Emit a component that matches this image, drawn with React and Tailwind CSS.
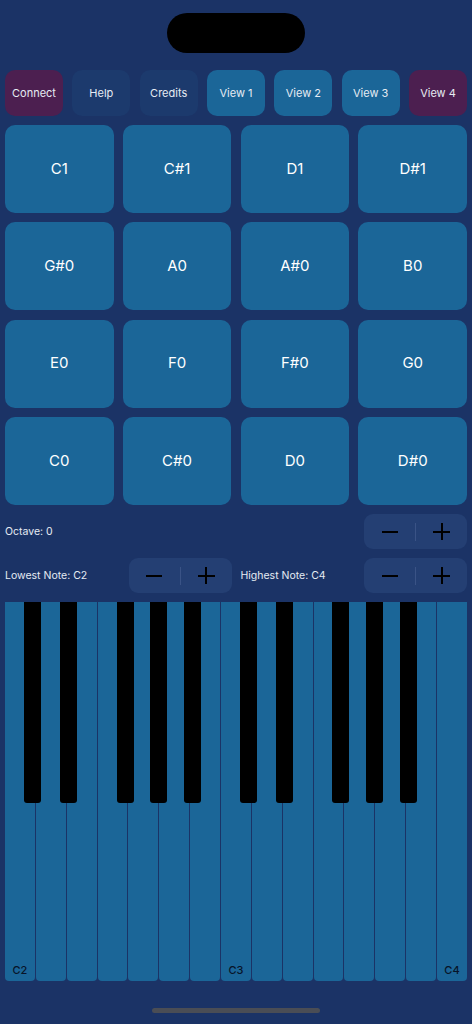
import React from 'react';

const topButtons = [
    { label: 'Connect', cls: 'bg-[#4c1f50]' },
    { label: 'Help', cls: 'bg-[#1c3a6d]' },
    { label: 'Credits', cls: 'bg-[#1c3a6d]' },
    { label: 'View 1', cls: 'bg-[#1b6698]' },
    { label: 'View 2', cls: 'bg-[#1b6698]' },
    { label: 'View 3', cls: 'bg-[#1b6698]' },
    { label: 'View 4', cls: 'bg-[#4c1f50]' },
];

const pads = [
    'C1', 'C#1', 'D1', 'D#1',
    'G#0', 'A0', 'A#0', 'B0',
    'E0', 'F0', 'F#0', 'G0',
    'C0', 'C#0', 'D0', 'D#0',
];

// black key offsets within an octave, in white-key widths
const blackOffsets = [0.62, 1.8, 3.63, 4.71, 5.81];
const WHITE_COUNT = 15;

function Stepper() {
    return (
        <div className="flex items-center w-[103px] h-[35px] rounded-[9px] bg-[#243f73]">
            <div className="flex-1 flex items-center justify-center">
                <div className="w-[16px] h-[2px] bg-black" />
            </div>
            <div className="w-px h-[18px] bg-[#3a5386]" />
            <div className="flex-1 flex items-center justify-center">
                <div className="relative w-[17px] h-[17px]">
                    <div className="absolute left-0 top-[7.5px] w-[17px] h-[2px] bg-black" />
                    <div className="absolute top-0 left-[7.5px] w-[2px] h-[17px] bg-black" />
                </div>
            </div>
        </div>
    );
}

function Piano() {
    const whites = [];
    for (let i = 0; i < WHITE_COUNT; i++) {
        let label = null;
        if (i === 0) label = 'C2';
        if (i === 7) label = 'C3';
        if (i === 14) label = 'C4';
        whites.push(
            <div key={i} className="flex-1 flex items-end justify-center pb-[3px] bg-[#1b6698] rounded-b-[4px]">
                {label && <span className="text-[11px] font-medium text-[#081428]">{label}</span>}
            </div>
        );
    }
    const blacks = [];
    for (let o = 0; o < 2; o++) {
        blackOffsets.forEach((off, j) => {
            const left = ((o * 7 + off) / WHITE_COUNT) * 100;
            blacks.push(
                <div
                    key={`${o}-${j}`}
                    className="absolute top-0 h-[53%] w-[17px] bg-black rounded-b-[3px]"
                    style={{ left: `${left}%` }}
                />
            );
        });
    }
    return (
        <div className="relative mx-[5px] h-[379px] flex gap-px">
            {whites}
            {blacks}
        </div>
    );
}

export default function App() {
    return (
        <div className="w-[472px] h-[1024px] bg-[#1b3366] flex flex-col text-[#e6ebf3]" style={{ fontFamily: 'Inter, "Noto Sans", sans-serif' }}>
            <div className="flex justify-center pt-[13px]">
                <div className="w-[138px] h-[40px] rounded-full bg-black" />
            </div>

            <div className="grid grid-cols-7 gap-[9.3px] px-[5px] mt-[17px]">
                {topButtons.map((b) => (
                    <div key={b.label} className={`h-[46px] rounded-[10px] flex items-center justify-center text-[11px] ${b.cls}`}>
                        {b.label}
                    </div>
                ))}
            </div>

            <div className="grid grid-cols-4 grid-rows-4 gap-[9.3px] px-[5px] mt-[9px] h-[380px]">
                {pads.map((p) => (
                    <div key={p} className="rounded-[10px] bg-[#1b6698] flex items-center justify-center text-[15px] text-white">
                        {p}
                    </div>
                ))}
            </div>

            <div className="flex items-center justify-between px-[5px] mt-[9px]">
                <span className="text-[10.5px]">Octave: 0</span>
                <Stepper />
            </div>

            <div className="flex items-center px-[5px] mt-[9px] gap-[9px]">
                <div className="flex-1 flex items-center justify-between">
                    <span className="text-[10.5px]">Lowest Note: C2</span>
                    <Stepper />
                </div>
                <div className="flex-1 flex items-center justify-between">
                    <span className="text-[10.5px]">Highest Note: C4</span>
                    <Stepper />
                </div>
            </div>

            <div className="mt-[9px]">
                <Piano />
            </div>

            <div className="flex justify-center mt-[27px]">
                <div className="w-[168px] h-[5px] rounded-full bg-[#4a4d55]" />
            </div>
        </div>
    );
}
